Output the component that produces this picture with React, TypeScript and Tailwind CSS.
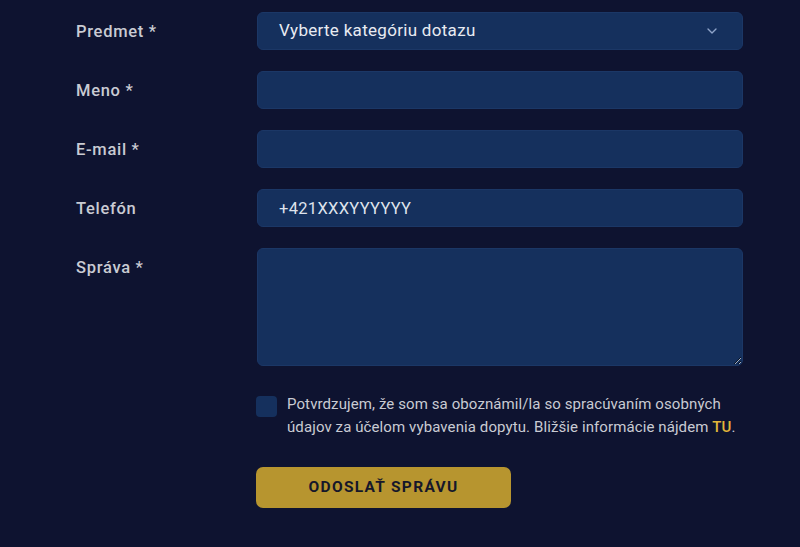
import { ChevronDown } from "lucide-react";

const fieldClass =
  "h-[38px] w-full rounded-[6px] border border-[#1b3766] bg-[#15305d] px-[21px] text-[16.5px] tracking-[0.3px] text-[#e8ebf2] outline-none";

function Row({ label, children }: { label: string; children: React.ReactNode }) {
  return (
    <div className="flex items-start">
      <label className="w-[181px] shrink-0 pt-[9px] text-[16.5px] font-medium leading-[22px] tracking-[0.7px] text-[#c9cbd3]">
        {label}
      </label>
      <div className="flex-1">{children}</div>
    </div>
  );
}

export default function App() {
  return (
    <div
      className="min-h-[547px] w-full bg-[#0e1330] pb-[40px] pl-[76px] pr-[57px] pt-[12px]"
      style={{ fontFamily: "Roboto, 'Liberation Sans', sans-serif" }}
    >
      <form className="flex flex-col gap-[21px]">
        <Row label="Predmet *">
          <div className={`${fieldClass} flex items-center justify-between pr-[22px] text-[17px]`}>
            <span>Vyberte kategóriu dotazu</span>
            <ChevronDown className="h-[16px] w-[16px] text-[#8fa4c9]" strokeWidth={2} />
          </div>
        </Row>
        <Row label="Meno *">
          <input className={fieldClass} />
        </Row>
        <Row label="E-mail *">
          <input className={fieldClass} />
        </Row>
        <Row label="Telefón">
          <input
            className={`${fieldClass} placeholder:text-[#dfe3ec]`}
            placeholder="+421XXXYYYYYY"
          />
        </Row>
        <Row label="Správa *">
          <textarea className={`${fieldClass} block h-[118px] resize-y`} />
        </Row>
      </form>

      <div className="ml-[180px] mt-[29px] flex items-start gap-[10px]">
        <span className="mt-[1px] h-[21px] w-[21px] shrink-0 rounded-[4px] bg-[#15305d]" />
        <p className="-mt-[2px] whitespace-nowrap text-[15px] leading-[23px] tracking-[0.1px] text-[#c9cbd3]">
          Potvrdzujem, že som sa oboznámil/la so spracúvaním osobných
          <br />
          údajov za účelom vybavenia dopytu. Bližšie informácie nájdem{" "}
          <span className="font-medium text-[#e2b63a]">TU</span>.
        </p>
      </div>

      <button
        type="button"
        className="ml-[180px] mt-[28px] h-[41px] w-[255px] rounded-[7px] bg-[#b7952f] text-[15.5px] font-bold tracking-[1.3px] text-[#15172a]"
      >
        ODOSLAŤ SPRÁVU
      </button>
    </div>
  );
}
